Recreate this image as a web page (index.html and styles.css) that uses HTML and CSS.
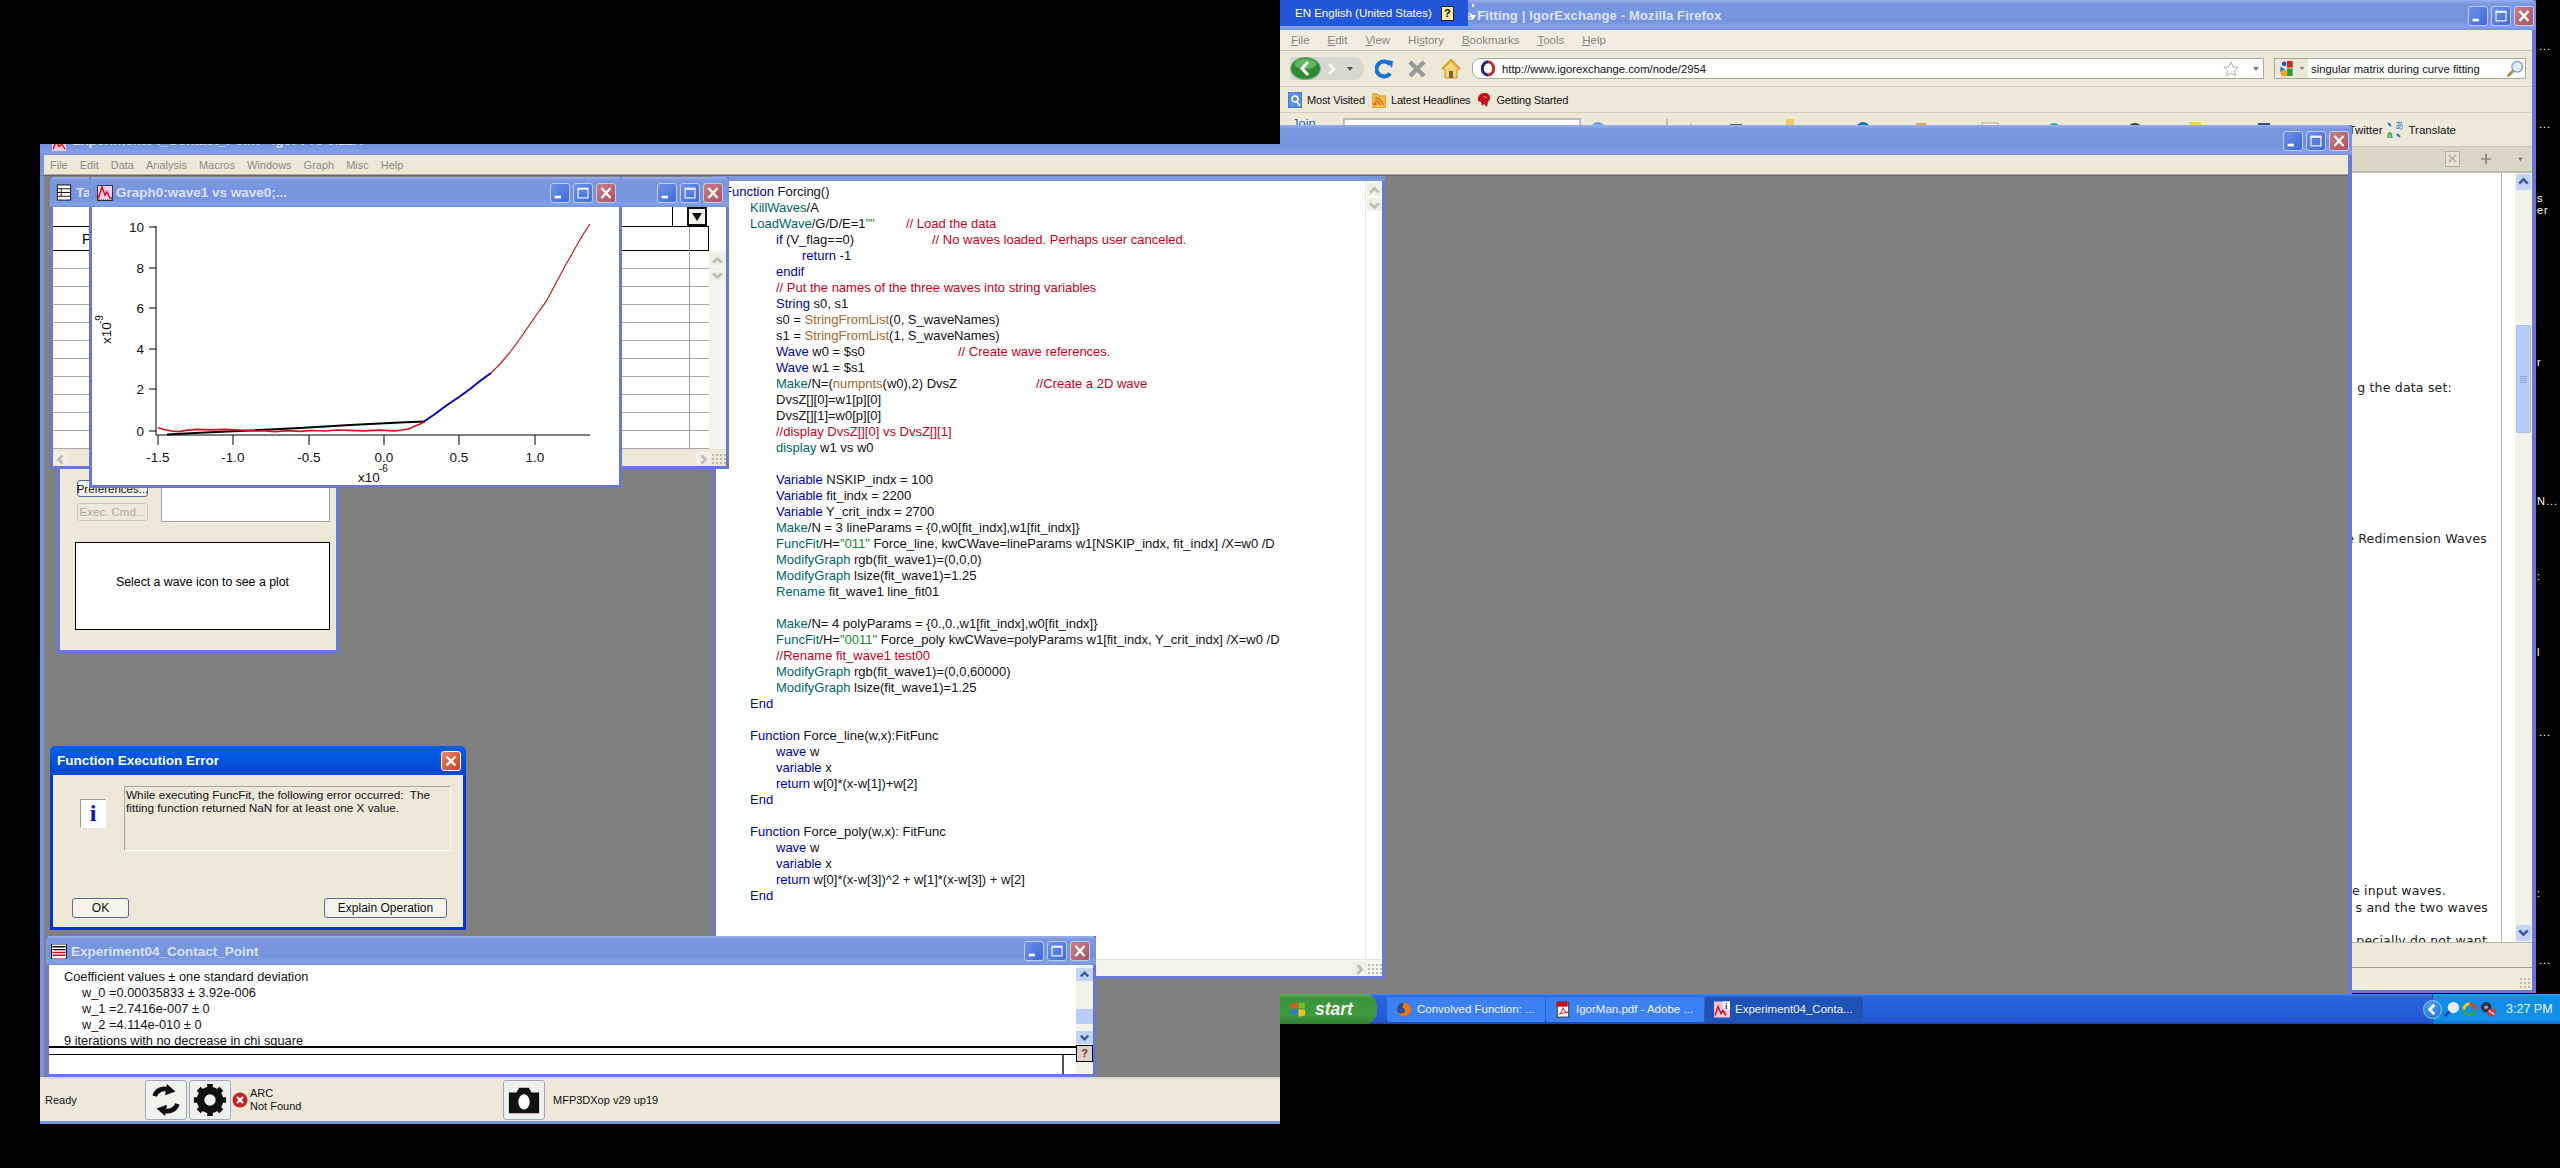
FILE: index.html
```html
<!DOCTYPE html>
<html lang="en">
<head>
<meta charset="utf-8">
<title>Igor Pro and Firefox desktop</title>
<link rel="stylesheet" href="styles.css">
</head>
<body>
<svg class="defs" width="0" height="0" aria-hidden="true">
  <symbol id="g-min" viewBox="0 0 20 20"><rect x="4" y="13" width="7" height="3" fill="#fff"/></symbol>
  <symbol id="g-max" viewBox="0 0 20 20"><path d="M4.500 5.500h11v10h-11z" fill="none" stroke="#e8eefc" stroke-width="1.400"/><path d="M4 4h12v2.400H4z" fill="#e8eefc"/></symbol>
  <symbol id="g-close" viewBox="0 0 20 20"><path d="M5 4.500l10 11M15 4.500l-10 11" stroke="#fff" stroke-width="2.600" fill="none"/></symbol>
</svg>
<div class="stage">

  <div class="dlabel d1">...</div><div class="dlabel d2">...</div><div class="dlabel d3">s</div><div class="dlabel d4">er</div><div class="dlabel d5">r</div><div class="dlabel d6">N...</div><div class="dlabel d7">:</div><div class="dlabel d8">l</div><div class="dlabel d9">...</div><div class="dlabel d10">:</div><div class="dlabel d11">...</div>

  <!-- Firefox -->
  <section class="ff">
    <header class="tbar ff-title">
      <span class="ff-title-text">e Fitting | IgorExchange - Mozilla Firefox</span>
      <div class="wbs"><span class="wb"><svg><use href="#g-min"/></svg></span><span class="wb"><svg><use href="#g-max"/></svg></span><span class="wb wc"><svg><use href="#g-close"/></svg></span></div>
    </header>
    <nav class="ff-menu"><span><u>F</u>ile</span><span><u>E</u>dit</span><span><u>V</u>iew</span><span>Hi<u>s</u>tory</span><span><u>B</u>ookmarks</span><span><u>T</u>ools</span><span><u>H</u>elp</span></nav>
    <div class="ff-nav">
      <div class="navpill">
        <svg class="back" viewBox="0 0 31 23"><ellipse cx="15.500" cy="11.500" rx="15" ry="11.200" fill="#2f8a35" stroke="#8fb58f"/><ellipse cx="15.500" cy="7" rx="11" ry="5" fill="#63b562"/><path d="M18 5l-6 6.500 6 6.500" fill="none" stroke="#fff" stroke-width="3"/></svg>
        <svg class="fwd" viewBox="0 0 10 14"><path d="M2 2l5 5-5 5" fill="none" stroke="#fff" stroke-width="2.400"/></svg>
        <svg class="drop" viewBox="0 0 8 6"><path d="M1 1h6l-3 4z" fill="#555"/></svg>
      </div>
      <svg class="reload" viewBox="0 0 18 20"><path d="M15 5.500A7.500 7.500 0 1 0 15 14.500" fill="none" stroke="#1a6fd6" stroke-width="4"/><path d="M11 1l7 1-1 7z" fill="#1a6fd6"/></svg>
      <svg class="stop" viewBox="0 0 18 20"><path d="M2 3l14 14M16 3L2 17" stroke="#9a9a94" stroke-width="4.500" fill="none"/></svg>
      <svg class="home" viewBox="0 0 20 20"><path d="M10 1L1 10h3v9h12v-9h3z" fill="#f6d77e" stroke="#c98b22"/><path d="M1 10l9-9 9 9" fill="none" stroke="#e29a24" stroke-width="2"/><rect x="8" y="12" width="4" height="7" fill="#8a5a2a"/></svg>
      <div class="urlbar">
        <svg class="fav" viewBox="0 0 16 18"><ellipse cx="8" cy="9" rx="6" ry="7" fill="none" stroke="#c8202a" stroke-width="3"/><path d="M8 2a6 7 0 0 0 0 14" fill="none" stroke="#1c2a8a" stroke-width="3"/></svg>
        <span class="url">http://www.igorexchange.com/node/2954</span>
        <svg class="star" viewBox="0 0 20 20"><path d="M10 2l2.400 5.500 5.600.5-4.200 3.800 1.300 5.700-5.100-3-5.100 3 1.300-5.700L2 8l5.600-.5z" fill="#fff" stroke="#a5a59c"/></svg>
        <svg class="drop2" viewBox="0 0 8 6"><path d="M1 1h6l-3 4z" fill="#777"/></svg>
      </div>
      <div class="searchbar">
        <span class="engine"><svg class="goog" viewBox="0 0 15 18"><circle cx="5" cy="4" r="2.500" fill="#1f54c8"/><rect x="8" y="1" width="6" height="7" fill="#d6231f"/><path d="M1 7l5 3-5 3z" fill="#2a69d8"/><rect x="8" y="9" width="6" height="8" fill="#2d9a36"/><circle cx="5" cy="14" r="3.500" fill="#f2a71b"/></svg><svg class="drop3" viewBox="0 0 8 6"><path d="M1 1h6l-3 4z" fill="#777"/></svg></span>
        <span class="query">singular matrix during curve fitting</span>
        <svg class="mag" viewBox="0 0 20 20"><circle cx="12.500" cy="7.500" r="6" fill="#dcebfa" stroke="#7f9fbf" stroke-width="1.500"/><path d="M8 12l-6 6" stroke="#b4824a" stroke-width="3"/></svg>
      </div>
    </div>
    <div class="ff-bm">
      <span class="bm"><svg viewBox="0 0 14 16"><rect width="14" height="16" y="0" fill="#5b8edb" stroke="#3c6db5"/><circle cx="7" cy="7" r="3" fill="none" stroke="#fff" stroke-width="1.500"/><path d="M9 10l3 4" stroke="#fff" stroke-width="1.500"/></svg>Most Visited</span>
      <span class="bm"><svg viewBox="0 0 14 16"><path d="M0 2h5l2 2h7v12H0z" fill="#f1c04a" stroke="#c9952a"/><path d="M3 13a1 1 0 1 1 .1 0M3 9a5 5 0 0 1 5 4M3 6a8 8 0 0 1 8 7" stroke="#e46a11" fill="none" stroke-width="1.500"/></svg>Latest Headlines</span>
      <span class="bm"><svg viewBox="0 0 14 16"><path d="M1 7c0-4 3-6 7-6 3 0 5 2 5 5 0 2-1 3-2 4l-1 5-3-3-2 2-1-4-3-1z" fill="#c4101a"/><path d="M6 4l4 2" stroke="#ff9a80"/></svg>Getting Started</span>
    </div>
    <div class="ff-row3">
      <svg class="row3-tops" viewBox="1280 112 1075 33" preserveAspectRatio="none"><text x="1292" y="127" class="jointext">Join</text><rect x="1344" y="118" width="236" height="20" fill="#fff" stroke="#888"/><circle cx="1598" cy="128" r="7" fill="#6aa6dc"/><path d="M1667 118v16" stroke="#888"/><path d="M1691 123l5 8h-10z" fill="#c8222a"/><rect x="1730" y="123" width="12" height="8" fill="#666"/><rect x="1786" y="118" width="8" height="12" fill="#e8cf6a"/><circle cx="1863" cy="128" r="7" fill="#1c6fb5"/><rect x="1916" y="122" width="10" height="8" fill="#e8a84a"/><rect x="1982" y="122" width="16" height="10" fill="#f4f4f4" stroke="#aaa"/><circle cx="2054" cy="128" r="6" fill="#3aa0a8"/><circle cx="2135" cy="130" r="8" fill="#444"/><rect x="2189" y="121" width="12" height="8" fill="#e8d85a"/><rect x="2258" y="122" width="12" height="10" fill="#3a4e8a"/></svg>
      <span class="tw">Twitter</span>
      <svg class="trans" viewBox="0 0 16 18"><text x="8" y="8" class="ja">あ</text><text x="0" y="17" class="tra">a</text><path d="M1 2l3 3M10 13l3 3" stroke="#2a70c8" stroke-width="2"/></svg>
      <span class="tw">Translate</span>
    </div>
    <div class="ff-tabs">
      <span class="tabclose"><svg viewBox="0 0 14 14"><path d="M3 3l8 8M11 3l-8 8" stroke="#bbb8aa" stroke-width="2"/></svg></span>
      <svg class="tabmove" viewBox="0 0 14 14"><path d="M7 1v12M1 7h12" stroke="#8c8a7c" stroke-width="2"/></svg>
      <svg class="tabdrop" viewBox="0 0 8 6"><path d="M1 1h6l-3 4z" fill="#807e70"/></svg>
    </div>
    <div class="ff-page">
      <div class="page-body">
        <p class="pl p1">g the data set:</p>
        <p class="pl p2">e Redimension Waves</p>
        <p class="pl p3">e input waves.</p>
        <p class="pl p4">s and the two waves</p>
        <p class="pl p5">pecially do not want</p>
      </div>
      <div class="page-sb">
        <span class="sb-btn"><svg viewBox="0 0 14 14"><path d="M3 9l4-4 4 4" fill="none" stroke="#3c5a9a" stroke-width="2.500"/></svg></span>
        <span class="sb-thumb"><i></i></span>
        <span class="sb-btn sb-end"><svg viewBox="0 0 14 14"><path d="M3 5l4 4 4-4" fill="none" stroke="#3c5a9a" stroke-width="2.500"/></svg></span>
      </div>
    </div>
    <div class="ff-strip"></div>
    <div class="ff-status"><span class="grip"></span></div>
  </section>

  <!-- Igor main window -->
  <section class="igor">
    <header class="tbar igor-title">
      <svg class="igor-ico" viewBox="0 0 16 16"><rect width="16" height="16" fill="#f2c8d8"/><path d="M1 14l4-9 3 6 3-3 4 6" fill="none" stroke="#c01020" stroke-width="1.500"/></svg>
      <span class="t-text igor-name">Experiment04_Contact_Point - Igor Pro 6.22A</span>
      <div class="wbs"><span class="wb"><svg><use href="#g-min"/></svg></span><span class="wb"><svg><use href="#g-max"/></svg></span><span class="wb wc"><svg><use href="#g-close"/></svg></span></div>
    </header>
    <nav class="igor-menu"><span>File</span><span>Edit</span><span>Data</span><span>Analysis</span><span>Macros</span><span>Windows</span><span>Graph</span><span>Misc</span><span>Help</span></nav>
    <div class="mdi"></div>
    <footer class="igor-status">
      <span class="ready">Ready</span>
      <span class="tool t-refresh"><svg viewBox="0 0 36 36"><path d="M6 14C8 7 15 5 21 7" fill="none" stroke="#111" stroke-width="5"/><path d="M19 1l9 8-11 4z" fill="#111"/><path d="M30 22c-2 7-9 9-15 7" fill="none" stroke="#111" stroke-width="5"/><path d="M17 35l-9-8 11-4z" fill="#111"/></svg></span>
      <span class="tool t-gear"><svg viewBox="0 0 36 36"><circle cx="18" cy="18" r="10" fill="none" stroke="#111" stroke-width="8"/><path d="M18 1v7M18 28v7M1 18h7M28 18h7M6 6l5 5M25 25l5 5M30 6l-5 5M11 25l-5 5" stroke="#111" stroke-width="6"/></svg></span>
      <svg class="arc-x" viewBox="0 0 16 16"><circle cx="8" cy="8" r="7.500" fill="#c8202c"/><path d="M5 5l6 6M11 5l-6 6" stroke="#fff" stroke-width="2.200"/></svg>
      <span class="arc">ARC<br>Not Found</span>
      <span class="tool t-cam"><svg viewBox="0 0 36 36"><path d="M2 10h8l3-5h10l3 5h8v22H2z" fill="#111"/><ellipse cx="18" cy="20" rx="6" ry="8" fill="#fff"/></svg></span>
      <span class="xop">MFP3DXop v29 up19</span>
    </footer>
  </section>

  <!-- Procedure window -->
  <section class="win editor">
    <div class="ed-strip"></div>
    <div class="ed-main">
<pre class="code"><span class="k">Function</span> Forcing()
	<span class="o">KillWaves</span>/A
	<span class="o">LoadWave</span>/G/D/E=1<span class="s">""</span>		<span class="c">// Load the data</span>
		<span class="k">if</span> (V_flag==0)			<span class="c">// No waves loaded. Perhaps user canceled.</span>
			<span class="k">return</span> -1
		<span class="k">endif</span>
		<span class="c">// Put the names of the three waves into string variables</span>
		<span class="k">String</span> s0, s1
		s0 = <span class="f">StringFromList</span>(0, S_waveNames)
		s1 = <span class="f">StringFromList</span>(1, S_waveNames)
		<span class="k">Wave</span> w0 = $s0				<span class="c">// Create wave references.</span>
		<span class="k">Wave</span> w1 = $s1
		<span class="o">Make</span>/N=(<span class="f">numpnts</span>(w0),2) DvsZ			<span class="c">//Create a 2D wave</span>
		DvsZ[][0]=w1[p][0]
		DvsZ[][1]=w0[p][0]
		<span class="c">//display DvsZ[][0] vs DvsZ[][1]</span>
		<span class="o">display</span> w1 vs w0

		<span class="k">Variable</span> NSKIP_indx = 100
		<span class="k">Variable</span> fit_indx = 2200
		<span class="k">Variable</span> Y_crit_indx = 2700
		<span class="o">Make</span>/N = 3 lineParams = {0,w0[fit_indx],w1[fit_indx]}
		<span class="o">FuncFit</span>/H=<span class="s">"011"</span> Force_line, kwCWave=lineParams w1[NSKIP_indx, fit_indx] /X=w0 /D
		<span class="o">ModifyGraph</span> rgb(fit_wave1)=(0,0,0)
		<span class="o">ModifyGraph</span> lsize(fit_wave1)=1.25
		<span class="o">Rename</span> fit_wave1 line_fit01

		<span class="o">Make</span>/N= 4 polyParams = {0.,0.,w1[fit_indx],w0[fit_indx]}
		<span class="o">FuncFit</span>/H=<span class="s">"0011"</span> Force_poly kwCWave=polyParams w1[fit_indx, Y_crit_indx] /X=w0 /D
		<span class="c">//Rename fit_wave1 test00</span>
		<span class="o">ModifyGraph</span> rgb(fit_wave1)=(0,0,60000)
		<span class="o">ModifyGraph</span> lsize(fit_wave1)=1.25
	<span class="k">End</span>

	<span class="k">Function</span> Force_line(w,x):FitFunc
		<span class="k">wave</span> w
		<span class="k">variable</span> x
		<span class="k">return</span> w[0]*(x-w[1])+w[2]
	<span class="k">End</span>

	<span class="k">Function</span> Force_poly(w,x): FitFunc
		<span class="k">wave</span> w
		<span class="k">variable</span> x
		<span class="k">return</span> w[0]*(x-w[3])^2 + w[1]*(x-w[3]) + w[2]
	<span class="k">End</span></pre>
      <div class="ed-sb">
        <span class="sb-dis"><svg viewBox="0 0 14 14"><path d="M3 9l4-4 4 4" fill="none" stroke="#bdbdb4" stroke-width="2.500"/></svg></span>
        <span class="sb-dis sb-end"><svg viewBox="0 0 14 14"><path d="M3 5l4 4 4-4" fill="none" stroke="#bdbdb4" stroke-width="2.500"/></svg></span>
      </div>
    </div>
    <div class="hsb"><span class="sb-dis"><svg viewBox="0 0 14 14"><path d="M5 3l4 4-4 4" fill="none" stroke="#bdbdb4" stroke-width="2.500"/></svg></span><span class="grip"></span></div>
  </section>

  <!-- Data browser panel -->
  <section class="win panel">
    <div class="panel-top">
      <div class="panel-btns">
        <span class="btn">Preferences...</span>
        <span class="btn btn-dis">Exec. Cmd...</span>
      </div>
      <div class="panel-input"></div>
    </div>
    <div class="panel-plot">Select a wave icon to see a plot</div>
  </section>

  <!-- Table -->
  <section class="win table">
    <header class="tbar">
      <svg class="ico-table" viewBox="0 0 16 18"><rect x="1" y="1" width="14" height="16" fill="#fff" stroke="#111"/><path d="M1 5h14M1 9h14M1 13h14M5 5v8" stroke="#111"/></svg>
      <span class="t-text">Ta</span>
      <div class="wbs"><span class="wb"><svg><use href="#g-min"/></svg></span><span class="wb"><svg><use href="#g-max"/></svg></span><span class="wb wc"><svg><use href="#g-close"/></svg></span></div>
    </header>
    <div class="tb-main">
      <div class="tb-cells">
        <div class="tb-r0"><span class="tb-dd"><svg viewBox="0 0 12 10"><path d="M1 1h10L6 9z" fill="#111"/></svg></span></div>
        <div class="tb-r1">P</div>
        <div class="tb-grid"></div>
      </div>
      <div class="ed-sb tb-sb">
        <span class="sb-dis"><svg viewBox="0 0 14 14"><path d="M3 9l4-4 4 4" fill="none" stroke="#bdbdb4" stroke-width="2.500"/></svg></span>
        <span class="sb-dis sb-end"><svg viewBox="0 0 14 14"><path d="M3 5l4 4 4-4" fill="none" stroke="#bdbdb4" stroke-width="2.500"/></svg></span>
      </div>
    </div>
    <div class="hsb tb-hsb"><span class="sb-dis"><svg viewBox="0 0 14 14"><path d="M9 3l-4 4 4 4" fill="none" stroke="#bdbdb4" stroke-width="2.500"/></svg></span><span class="tb-spacer"></span><span class="sb-dis"><svg viewBox="0 0 14 14"><path d="M5 3l4 4-4 4" fill="none" stroke="#bdbdb4" stroke-width="2.500"/></svg></span><span class="grip"></span></div>
  </section>

  <!-- Graph -->
  <section class="win graph">
    <header class="tbar">
      <svg class="ico-graph" viewBox="0 0 16 16"><rect x="0.500" y="0.500" width="15" height="15" fill="#f5d0e0" stroke="#334"/><path d="M1 14L5 2l3 8 2-3 3 6h2" fill="none" stroke="#d01030" stroke-width="1.500"/><path d="M0 15h16" stroke="#111" stroke-dasharray="1 1"/></svg>
      <span class="t-text">Graph0:wave1 vs wave0;...</span>
      <div class="wbs"><span class="wb"><svg><use href="#g-min"/></svg></span><span class="wb"><svg><use href="#g-max"/></svg></span><span class="wb wc"><svg><use href="#g-close"/></svg></span></div>
    </header>
    <svg class="plot" viewBox="92 207 527 278">
      <g class="ax">
        <path d="M156 226V435H590"/>
        <path d="M149 227h7M149 268h7M149 308h7M149 349h7M149 389h7M149 431h7"/>
        <path d="M158 435v10M233 435v10M309 435v10M384 435v10M459 435v10M535 435v10"/>
      </g>
      <g class="tn">
        <text x="144" y="232" class="end">10</text><text x="144" y="273" class="end">8</text><text x="144" y="313" class="end">6</text><text x="144" y="354" class="end">4</text><text x="144" y="394" class="end">2</text><text x="144" y="436" class="end">0</text>
        <text x="158" y="462" class="mid">-1.5</text><text x="233" y="462" class="mid">-1.0</text><text x="309" y="462" class="mid">-0.5</text><text x="384" y="462" class="mid">0.0</text><text x="459" y="462" class="mid">0.5</text><text x="535" y="462" class="mid">1.0</text>
        <text x="358" y="482">x10</text><text x="379" y="472" class="sup">-6</text>
        <text x="111" y="344" transform="rotate(-90 111 344)">x10</text><text x="103" y="324" transform="rotate(-90 103 324)" class="sup">-9</text>
      </g>
      <path class="c-blk" d="M167 434.500L200 432.800 250 430.500 300 428 350 425 400 422.500 425 421.500"/>
      <path class="c-red c-noisy" d="M158 427.700L164 429.500 171 431 179 431.700 186 430.300 197 429.300 210 429.900 225 429.300 239 430 255 431 265 430.800 275 431.700 288 430.700 300 431.300 312 430.500 325 431 337 430 349 430.400 365 430.900 380 430.200 395 430.900 402 430 408.500 429 414 426.500 420 424 424.600 421.700"/>
      <path class="c-blu" d="M424 421.500L435 414 447 405 459 397 470 389 480 381 491 373"/>
      <path class="c-red" d="M491 373L500 364 509.500 353 519 340 528 327 537 314 546 301.700 555 285 564.600 266.700 572 254 578 243 584 233 590 224"/>
    </svg>
  </section>

  <!-- Error dialog -->
  <section class="dialog">
    <header class="dlg-title"><span>Function Execution Error</span><span class="dlg-close"><svg viewBox="0 0 20 20"><path d="M5 5l10 10M15 5L5 15" stroke="#fff" stroke-width="2.600"/></svg></span></header>
    <div class="dlg-body">
      <span class="dlg-icon">i</span>
      <div class="dlg-msg">While executing FuncFit, the following error occurred:&nbsp; The fitting function returned NaN for at least one X value.</div>
    </div>
    <div class="dlg-btns"><span class="btn dlg-ok">OK</span><span class="btn dlg-explain">Explain Operation</span></div>
  </section>

  <!-- Command window -->
  <section class="win cmd">
    <header class="tbar">
      <svg class="ico-cmd" viewBox="0 0 16 16"><rect width="16" height="16" fill="#fff" stroke="#111"/><path d="M1 3h14M1 6h14" stroke="#111" stroke-width="1.500"/><path d="M1 9h14M1 12h14" stroke="#c01020" stroke-width="1.500"/></svg>
      <span class="t-text">Experiment04_Contact_Point</span>
      <div class="wbs"><span class="wb"><svg><use href="#g-min"/></svg></span><span class="wb"><svg><use href="#g-max"/></svg></span><span class="wb wc"><svg><use href="#g-close"/></svg></span></div>
    </header>
    <div class="cmd-main">
      <div class="cmd-left">
        <div class="cmd-log"><p>Coefficient values ± one standard deviation</p><p class="ind">w_0 =0.00035833 ± 3.92e-006</p><p class="ind">w_1 =2.7416e-007 ± 0</p><p class="ind">w_2 =4.114e-010 ± 0</p><p>9 iterations with no decrease in chi square</p></div>
        <div class="cmd-input"></div>
        <div class="cmd-rest"><i></i></div>
      </div>
      <div class="cmd-sb">
        <span class="cb"><svg viewBox="0 0 14 14"><path d="M3 9l4-4 4 4" fill="none" stroke="#3c5a9a" stroke-width="2.500"/></svg></span>
        <span class="cthumb"></span>
        <span class="cb"><svg viewBox="0 0 14 14"><path d="M3 5l4 4 4-4" fill="none" stroke="#3c5a9a" stroke-width="2.500"/></svg></span>
        <span class="chelp">?</span>
      </div>
    </div>
  </section>

  <div class="mask m-left"></div>
  <div class="mask m-right"></div>

  <!-- Language bar -->
  <div class="langbar"><span>EN English (United States)</span><span class="lang-help">?</span><svg class="lang-arrow" viewBox="0 0 8 20"><path d="M4 1v3" stroke="#fff" stroke-width="2"/><path d="M1 12h6l-3 5z" fill="#fff"/></svg></div>

  <!-- Taskbar -->
  <div class="taskbar">
    <div class="start">
      <svg class="flag" viewBox="0 0 18 18"><path d="M1 4l7-2v6l-7 1z" fill="#e8542a"/><path d="M9 2l7 1v6l-7-1z" fill="#7ab82a"/><path d="M1 10l7-1v7l-7-2z" fill="#2a7ad8"/><path d="M9 9l7 1v6l-7 1z" fill="#f2c21a"/></svg>
      <span>start</span>
    </div>
    <div class="task"><svg viewBox="0 0 16 18"><circle cx="8" cy="9" r="7.500" fill="#2a4e9a"/><path d="M8 1.500a7.500 7.500 0 1 1-7 10c2 2 6 3 8 0 1-2-1-4-3-4 1-2 1-4 2-6z" fill="#e8791a"/></svg><span>Convolved Function: ...</span></div>
    <div class="task"><svg viewBox="0 0 14 18"><path d="M1 1h12v16H1z" fill="#fff" stroke="#333"/><rect x="0" y="1" width="12" height="5" fill="#c8101a"/><path d="M3 14c3-2 4-5 4-7 1 3 2 5 5 5-3 0-6 1-9 2z" fill="none" stroke="#c8101a"/></svg><span>IgorMan.pdf - Adobe ...</span></div>
    <div class="task task-on"><svg viewBox="0 0 16 16"><rect width="16" height="16" fill="#f4c8dc"/><path d="M1 14l3-9 3 7 2-3 3 5" fill="none" stroke="#c01020" stroke-width="1.500"/><rect x="9" y="0" width="7" height="8" fill="#fff"/><text x="11" y="7" class="ti">i</text></svg><span>Experiment04_Conta...</span></div>
    <div class="tray">
      <span class="chev"><svg viewBox="0 0 18 18"><path d="M11 4L6 9l5 5" fill="none" stroke="#fff" stroke-width="2.800"/></svg></span>
      <svg class="tr-mag" viewBox="0 0 18 18"><circle cx="11" cy="7" r="6" fill="#e4eefc"/><path d="M7 11l-5 5" stroke="#1c3ab0" stroke-width="2.500"/></svg>
      <svg class="tr-ring" viewBox="0 0 18 18"><circle cx="9" cy="9" r="6" fill="none" stroke="#3aa04a" stroke-width="3"/><path d="M9 3a6 6 0 0 1 6 6" fill="none" stroke="#d8402a" stroke-width="3"/><path d="M3 9a6 6 0 0 1 6-6" fill="none" stroke="#e8c82a" stroke-width="3"/></svg>
      <svg class="tr-net" viewBox="0 0 18 18"><circle cx="7" cy="7" r="6" fill="#334"/><circle cx="7" cy="7" r="2" fill="#aab"/><circle cx="13" cy="13" r="4.500" fill="#e03030"/><path d="M10 11l6 4" stroke="#fff" stroke-width="1.500"/></svg>
      <span class="clock">3:27 PM</span>
    </div>
  </div>
</div>
</body>
</html>
```
FILE: styles.css
```css
* { box-sizing: border-box; }
html, body { margin: 0; padding: 0; background: #000; }
.defs { position: absolute; }
.stage { position: relative; width: 2560px; height: 1168px; overflow: hidden; background: #000; font-family: "Liberation Sans", Arial, sans-serif; color: #000; }
p { margin: 0; }

.dlabel { position: absolute; left: 2537px; color: #fff; font-size: 11px; line-height: 12px; letter-spacing: 1px; }
.d1 { top: 40px; left: 2539px; } .d2 { top: 118px; left: 2539px; } .d3 { top: 192px; } .d4 { top: 204px; } .d5 { top: 356px; }
.d6 { top: 495px; } .d7 { top: 570px; } .d8 { top: 646px; } .d9 { top: 726px; left: 2539px; } .d10 { top: 887px; } .d11 { top: 954px; left: 2539px; }

/* title bars */
.tbar { display: flex; align-items: center; height: 30px; flex: none; padding: 1px 3px 0 6px; background: linear-gradient(#9ab0ec 0, #7a97e0 12%, #7592de 70%, #83a0e8 90%, #7591dc 100%); border-radius: 5px 5px 0 0; }
.t-text { font: bold 13.500px "Liberation Sans", sans-serif; color: #d9e3f9; white-space: nowrap; }
.wbs { display: flex; gap: 3px; margin-left: auto; }
.wb { display: block; width: 20px; height: 20px; border: 1px solid #bcccf2; border-radius: 3px; background: linear-gradient(135deg, #6f92ea, #3f69d8); }
.wb svg { display: block; width: 100%; height: 100%; }
.wc { background: linear-gradient(135deg, #c98088, #ad4f60); }

/* Firefox */
.ff { position: absolute; left: 1280px; top: 0; width: 1256px; height: 993px; display: flex; flex-direction: column; background: #ece9d8; border-right: 4px solid #6b77d6; border-bottom: 3px solid #6b77d6; }
.ff-title { padding-right: 2px; margin-right: -4px; }
.ff-title-text { margin-left: 180px; font: bold 13px "Liberation Sans", sans-serif; color: #dbe6fb; letter-spacing: .15px; white-space: nowrap; }
.ff-menu { display: flex; gap: 18px; height: 21px; flex: none; align-items: center; padding-left: 11px; background: #f0eee0; border-bottom: 1px solid #c8c5b4; font: 11.500px "Liberation Sans", sans-serif; color: #86867c; }
.ff-nav { display: flex; align-items: center; height: 36px; flex: none; background: #ece9d8; border-bottom: 1px solid #cfccba; padding-left: 10px; }
.navpill { display: flex; align-items: center; width: 74px; height: 23px; background: #d8d8d2; border-radius: 0 12px 12px 0; position: relative; }
.back { width: 31px; height: 23px; }
.fwd { width: 10px; height: 14px; margin-left: 6px; }
.drop { width: 8px; height: 6px; margin-left: 9px; }
.reload { width: 18px; height: 20px; margin-left: 11px; }
.stop { width: 18px; height: 20px; margin-left: 15px; }
.home { width: 20px; height: 20px; margin-left: 15px; }
.urlbar { display: flex; align-items: center; width: 792px; height: 21px; margin-left: 11px; background: #fff; border: 1px solid #a8a89c; border-radius: 8px 0 0 8px; padding-left: 7px; }
.fav { width: 16px; height: 17px; flex: none; }
.url { margin-left: 6px; font: 11.300px "Liberation Sans", sans-serif; color: #111; }
.star { width: 18px; height: 18px; margin-left: auto; }
.drop2 { width: 8px; height: 6px; margin: 0 3px 0 12px; }
.searchbar { display: flex; align-items: center; width: 252px; height: 21px; margin-left: 10px; background: #fff; border: 1px solid #a8a89c; }
.engine { display: flex; align-items: center; gap: 5px; height: 100%; padding: 0 4px; background: #ece9d8; width: 33px; flex: none; }
.goog { width: 15px; height: 17px; flex: none; }
.drop3 { width: 6px; height: 5px; flex: none; }
.query { margin-left: 3px; font: 11.300px "Liberation Sans", sans-serif; color: #111; white-space: nowrap; }
.mag { width: 20px; height: 18px; margin-left: auto; }
.ff-bm { display: flex; align-items: center; gap: 7px; height: 26px; flex: none; padding-left: 8px; background: #ece9d8; border-bottom: 1px solid #d0cdbc; font: 11px "Liberation Sans", sans-serif; letter-spacing: -.15px; color: #111; }
.bm { display: flex; align-items: center; gap: 5px; white-space: nowrap; }
.bm svg { width: 14px; height: 16px; }
.ff-row3 { position: relative; display: flex; align-items: center; justify-content: flex-end; height: 33px; flex: none; padding: 0 76px 0 0; gap: 5px; font: 11.500px "Liberation Sans", sans-serif; background: #ece9d8; }
.row3-tops { position: absolute; left: 0; top: 0; width: 1075px; height: 33px; }
.jointext { font: 13px "Liberation Sans", sans-serif; fill: #2a66c0; }
.tw { color: #111; }
.trans { width: 16px; height: 18px; }
.ja { font: 9px "Noto Sans CJK JP", sans-serif; fill: #2a70c8; }
.tra { font: bold 10px "Liberation Sans", sans-serif; fill: #2aa050; }
.ff-tabs { display: flex; align-items: center; height: 27px; flex: none; background: #d9d6c5; border-bottom: 2px solid #bdbaa8; border-top: 1px solid #c8c5b4; padding-right: 4px; justify-content: flex-end; gap: 20px; }
.tabclose { display: block; width: 15px; height: 16px; border: 1px solid #b4b1a2; background: #e6e4d6; }
.tabclose svg { display: block; }
.tabmove { width: 12px; height: 12px; margin-right: 5px; }
.tabdrop { width: 7px; height: 5px; margin-right: 4px; }
.ff-page { display: flex; flex: 1; min-height: 0; background: #fff; overflow: hidden; }
.page-body { flex: 1; text-align: right; border-right: 1px solid #b4b4ae; font: 12.500px/17px "DejaVu Sans", sans-serif; color: #222; letter-spacing: .2px; overflow: hidden; }
.pl { white-space: nowrap; }
.p1 { margin-top: 206px; padding-right: 49px; }
.p2 { margin-top: 134px; padding-right: 14px; }
.p3 { margin-top: 335px; padding-right: 55px; }
.p4 { padding-right: 13px; }
.p5 { margin-top: 16px; padding-right: 14px; }
.page-sb { display: flex; flex-direction: column; align-items: center; width: 30px; padding: 1px 1px 1px 13px; background: linear-gradient(90deg, #fff 0 43%, #f2f1ea 43%); }
.sb-btn { display: block; width: 15px; height: 16px; background: #c3d3f7; border-radius: 2px; flex: none; }
.sb-btn svg, .sb-dis svg { display: block; }
.sb-thumb { display: flex; align-items: center; justify-content: center; width: 15px; height: 108px; margin-top: 135px; background: #bacdf7; border-radius: 2px; border: 1px solid #a6bdf0; }
.sb-thumb i { display: block; width: 7px; height: 7px; background: repeating-linear-gradient(#8ba4dc 0 1px, transparent 1px 2px); }
.sb-end { margin-top: auto; }
.ff-strip { height: 26px; flex: none; background: #ece9d8; border-bottom: 1px solid #9c9a8c; border-top: 1px solid #b8b6a8; }
.ff-status { display: flex; justify-content: flex-end; height: 22px; flex: none; background: #efecdc; }
.grip { display: block; width: 13px; height: 13px; margin-top: auto; background: radial-gradient(circle, #bdbaa8 1px, transparent 1.500px) 0 0 / 4px 4px; flex: none; }

/* Igor */
.igor { position: absolute; left: 40px; top: 125px; width: 2312px; height: 999px; display: flex; flex-direction: column; border-right: 4px solid #6b77d6; border-bottom: 3px solid #7b93dc; background: #808080; }
.igor-title { padding-right: 3px; margin-right: -4px; padding-left: 12px; }
.igor-ico { width: 14px; height: 14px; margin-top: 6px; }
.igor-name { margin-left: 6px; }
.igor-menu { display: flex; gap: 12px; align-items: center; height: 20px; flex: none; padding-left: 6px; background: #ece9d8; border-bottom: 1px solid #aaa89a; border-left: 4px solid #7b93dc; font: 11px "Liberation Sans", sans-serif; color: #8c8c84; }
.mdi { flex: 1; background: #808080; border-left: 4px solid #7b93dc; border-top: 1px solid #666; }
.igor-status { display: flex; align-items: center; height: 44px; flex: none; background: #ece9d8; border-top: 2px solid #dcdad0; font: 11px "Liberation Sans", sans-serif; color: #111; padding-left: 5px; }
.ready { width: 100px; flex: none; }
.tool { display: flex; align-items: center; justify-content: center; height: 40px; background: #f1f2ee; border: 1px solid #9aa8c8; border-radius: 3px; flex: none; }
.tool svg { width: 34px; height: 34px; }
.t-refresh { width: 42px; }
.t-gear { width: 42px; margin-left: 2px; }
.arc-x { width: 16px; height: 16px; margin-left: 1px; flex: none; }
.arc { margin-left: 2px; line-height: 13px; width: 253px; flex: none; white-space: nowrap; }
.t-cam { width: 42px; }
.xop { margin-left: 8px; white-space: nowrap; }

/* generic child window */
.win { position: absolute; display: flex; flex-direction: column; background: #fff; border: 3px solid #6b77d6; border-top: 0; }
.win .tbar { margin: 0 -3px; padding-right: 6px; }

/* editor */
.editor { left: 713px; top: 176px; width: 672px; height: 803px; }
.ed-strip { height: 5px; flex: none; margin: 0 -3px; background: #7a97e0; }
.ed-main { display: flex; flex: 1; min-height: 0; }
.code { flex: 1; margin: 0; padding: 3px 0 0 8px; font: 13px/16px "Liberation Sans", sans-serif; tab-size: 26px; color: #111; overflow: hidden; white-space: pre; }
.k { color: #0000a8; } .o { color: #006464; } .c { color: #c8001e; } .f { color: #a8642a; } .s { color: #1a8a2a; }
.ed-sb { display: flex; flex-direction: column; width: 17px; flex: none; border-left: 1px solid #e8e8e2; background: #fff; }
.sb-dis { display: block; width: 15px; height: 13px; margin: 2px 0 0 1px; background: #f0efe8; flex: none; }
.hsb { display: flex; align-items: flex-end; justify-content: flex-end; height: 17px; flex: none; background: #f5f4ee; border-top: 1px solid #e4e3da; }
.hsb .sb-dis { margin: 0 0 1px 0; }
.hsb .grip { width: 15px; }

/* panel */
.panel { left: 57px; top: 440px; width: 282px; height: 213px; padding: 40px 6px 0 15px; background: #ece9d8; }
.panel-top { display: flex; gap: 13px; }
.panel-btns { display: flex; flex-direction: column; gap: 6px; width: 73px; flex: none; padding-left: 2px; }
.btn { display: flex; align-items: center; justify-content: center; height: 17px; background: #f5f4ec; border: 1px solid #5c6c90; border-radius: 3px; font: 12px "Liberation Sans", sans-serif; color: #111; white-space: nowrap; }
.panel .btn { font-size: 11.500px; }
.panel .btn-dis { height: 18px; color: #a8a89c; border-color: #c8c6b8; background: #ece9d8; }
.panel-input { flex: 1; height: 42px; background: #fff; border: 1px solid #a0a0b0; }
.panel-plot { display: flex; align-items: center; justify-content: center; height: 88px; margin-top: 20px; padding-bottom: 8px; background: #fff; border: 1px solid #000; font-size: 12.300px; }

/* table */
.table { left: 50px; top: 177px; width: 679px; height: 292px; }
.ico-table { width: 16px; height: 17px; margin-right: 4px; }
.tb-main { display: flex; flex: 1; min-height: 0; }
.tb-cells { position: relative; display: flex; flex-direction: column; flex: 1; }
.tb-cells::after { content: ""; position: absolute; left: 636px; top: 20px; bottom: 0; width: 1px; background: #a0a0a0; }
.tb-r0 { position: relative; height: 20px; flex: none; border-bottom: 1px solid #000; }
.tb-r0::before { content: ""; position: absolute; left: 619px; top: 0; bottom: 0; width: 1px; background: #000; }
.tb-dd { position: absolute; left: 634px; top: 0; display: block; width: 20px; height: 19px; border: 2px solid #111; background: #f4f4f0; }
.tb-dd svg { display: block; width: 12px; height: 10px; margin: 3px auto; }
.tb-r1 { height: 24px; flex: none; padding-left: 29px; font: 14px/24px "Liberation Sans", sans-serif; border-bottom: 1px solid #000; border-right: 1px solid #000; }
.tb-grid { flex: 1; background: repeating-linear-gradient(#fff 0 17px, #a8a8a8 17px 18px); }
.tb-sb { border-left: 0; margin-top: 44px; background: #f5f4ee; }
.tb-hsb { justify-content: flex-start; background: #ece9d8; }
.tb-spacer { flex: 1; }

/* graph */
.graph { left: 89px; top: 177px; width: 533px; height: 311px; }
.ico-graph { width: 16px; height: 16px; margin: 0 3px 0 2px; }
.plot { display: block; width: 527px; height: 278px; flex: none; }
.ax path { fill: none; stroke: #000; stroke-width: 1; }
.tn text { font: 13.500px "Liberation Sans", sans-serif; fill: #111; }
.tn .end { text-anchor: end; }
.tn .mid { text-anchor: middle; }
.tn .sup { font-size: 10px; }
.c-red { fill: none; stroke: #d0101c; stroke-width: 1.200; }
.c-noisy { stroke-width: 1.700; }
.c-blk { fill: none; stroke: #000; stroke-width: 2; }
.c-blu { fill: none; stroke: #0000c0; stroke-width: 2; }

/* dialog */
.dialog { position: absolute; left: 50px; top: 746px; width: 416px; height: 184px; display: flex; flex-direction: column; background: #ece9d8; border: 3px solid #0831d9; border-top: 0; border-radius: 6px 6px 0 0; }
.dlg-title { display: flex; align-items: center; justify-content: space-between; height: 29px; flex: none; margin: 0 -3px; padding: 0 5px 0 7px; border-radius: 6px 6px 0 0; background: linear-gradient(#0a5fea, #0058e4 30%, #0648cc 90%, #0a50d8); font: bold 13.500px "Liberation Sans", sans-serif; color: #fff; }
.dlg-close { display: block; width: 20px; height: 20px; border: 1px solid #fff; border-radius: 3px; background: linear-gradient(135deg, #e8876a, #c8401a); }
.dlg-close svg { display: block; }
.dlg-body { display: flex; align-items: flex-start; padding: 11px 0 0 27px; }
.dlg-icon { display: block; width: 26px; height: 29px; margin-top: 13px; background: #fff; border: 1px solid #9c9a8c; border-right-color: #fff; border-bottom-color: #fff; font: bold 24px/27px "Liberation Serif", serif; color: #1010d0; text-align: center; }
.dlg-msg { width: 327px; height: 65px; margin-left: 18px; padding: 1px 10px 0 1px; border: 1px solid #a8a89c; border-right-color: #fff; border-bottom-color: #fff; font: 11.750px/13px "Liberation Sans", sans-serif; color: #111; }
.dlg-btns { display: flex; justify-content: space-between; margin-top: auto; padding: 0 16px 9px 19px; }
.dlg-ok { width: 57px; height: 20px; }
.dlg-explain { width: 123px; height: 20px; }

/* command */
.cmd { left: 46px; top: 936px; width: 1050px; height: 141px; }
.cmd .tbar { height: 29px; padding-left: 5px; }
.ico-cmd { width: 16px; height: 15px; margin-right: 4px; }
.cmd-main { display: flex; flex: 1; min-height: 0; }
.cmd-left { display: flex; flex-direction: column; flex: 1; }
.cmd-log { height: 83px; flex: none; padding: 4px 0 0 15px; border-bottom: 2px solid #000; font: 12.800px/16px "Liberation Sans", sans-serif; color: #111; }
.ind { padding-left: 18px; }
.cmd-input { height: 7px; flex: none; border-bottom: 1px solid #000; }
.cmd-rest { display: flex; flex: 1; justify-content: flex-end; padding-right: 12px; }
.cmd-rest i { display: block; width: 2px; background: #555; }
.cmd-sb { display: flex; flex-direction: column; width: 17px; flex: none; background: #f2f1ea; }
.cb { display: block; height: 13px; margin-top: 3px; background: #c3d3f7; flex: none; }
.cb svg { display: block; height: 13px; margin: auto; }
.cthumb { display: block; height: 15px; margin-top: 28px; margin-bottom: 4px; background: #bacdf7; flex: none; }
.chelp { display: block; height: 17px; margin-top: 1px; border: 1px solid #000; background: #d8d4cc; font: bold 11px/15px "Liberation Sans", sans-serif; text-align: center; color: #a02030; }

/* masks */
.mask { position: absolute; background: #000; }
.m-left { left: 0; top: 0; width: 1280px; height: 144px; }
.m-right { left: 1280px; top: 1024px; width: 1280px; height: 144px; }

/* language bar */
.langbar { position: absolute; left: 1280px; top: 0; width: 188px; height: 26px; display: flex; align-items: center; padding-left: 15px; gap: 9px; background: #2356d8; color: #fff; font: 11.500px "Liberation Sans", sans-serif; white-space: nowrap; }
.lang-help { display: block; width: 13px; height: 15px; background: #f7e8a8; border: 1px solid #222; color: #111; font: bold 11px/13px "Liberation Sans", sans-serif; text-align: center; flex: none; }
.lang-arrow { width: 8px; height: 20px; flex: none; margin-left: 6px; }

/* taskbar */
.taskbar { position: absolute; left: 1280px; top: 994px; width: 1280px; height: 30px; display: flex; align-items: center; background: linear-gradient(#3f8cf3 0, #2a66e0 8%, #245edb 50%, #2358d0 90%, #1b45a8 100%); }
.start { display: flex; align-items: center; gap: 8px; width: 97px; height: 30px; padding-left: 10px; flex: none; border-radius: 0 12px 12px 0; background: linear-gradient(#5fb05f 0, #3b943b 15%, #3f9a3f 70%, #2f7f30 100%); color: #f4f4f4; font: italic bold 17.500px "Liberation Sans", sans-serif; }
.flag { width: 17px; height: 18px; }
.task { display: flex; align-items: center; gap: 5px; width: 158px; height: 25px; margin: 0 1px 0 0; padding: 0 0 0 9px; border-radius: 2px; background: #3c81f3; color: #f2f6ff; font: 11.500px "Liberation Sans", sans-serif; white-space: nowrap; }
.task svg { width: 16px; height: 17px; flex: none; }
.start + .task { margin-left: 10px; }
.task-on { margin-left: 0; background: #1e52b7; }
.ti { font: bold 8px "Liberation Serif", serif; fill: #1010d0; }
.tray { display: flex; align-items: center; align-self: stretch; margin-left: auto; width: 128px; background: linear-gradient(#2aa0f0 0, #0f8ee9 10%, #1290e8 85%, #0f6fd0 100%); border-left: 1px solid #0f4fb0; position: relative; }
.chev { position: absolute; left: -10px; top: 6px; display: block; width: 19px; height: 19px; border-radius: 50%; background: radial-gradient(circle at 40% 30%, #4aa8f4, #1c66d0); border: 1px solid #9cc8f4; }
.chev svg { display: block; }
.tr-mag { width: 17px; height: 17px; margin-left: 10px; flex: none; }
.tr-ring { width: 17px; height: 17px; margin-left: 1px; flex: none; }
.tr-net { width: 16px; height: 16px; margin-left: 2px; flex: none; }
.clock { margin-left: 10px; color: #e8f2ff; font: 12.500px "Liberation Sans", sans-serif; white-space: nowrap; }
```
